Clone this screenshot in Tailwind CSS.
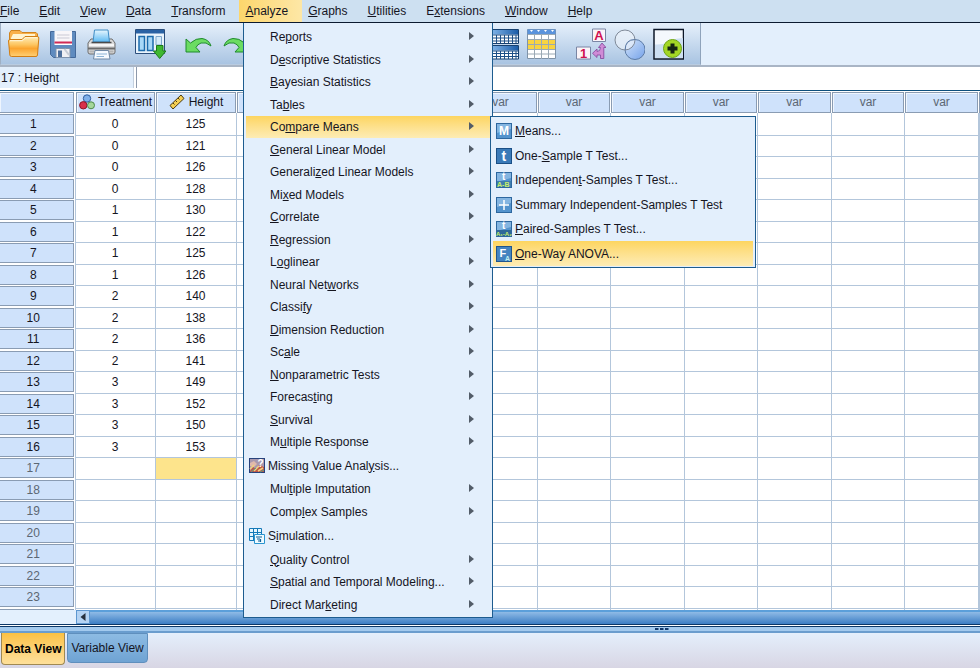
<!DOCTYPE html>
<html lang="en">
  <head>
    <meta charset="UTF-8" />
    <meta name="viewport" content="width=device-width, initial-scale=1.0" />
    <title>Data Editor</title>
    <script src="https://cdn.jsdelivr.net/npm/@tailwindcss/browser@4"></script>
  </head>
  <body
    class="relative flex h-screen flex-col overflow-hidden bg-white font-['Liberation_Sans',Arial,sans-serif] text-xs text-[#15151f]"
  >
    <!-- Menu bar -->
    <nav
      id="menu_bar"
      class="-ml-1.5 flex h-[23px] shrink-0 border-b border-[#0b1a30] bg-[#cde0f1]"
    ></nav>

    <!-- Toolbar -->
    <div class="flex h-11 shrink-0 border-b-2 border-[#a9b5c5] bg-[#e3effc]">
      <div
        class="flex items-center gap-4 border-r border-b border-l border-r-[#8fa3bb] border-b-[#b9cbe0] border-l-[#9fb0c4] border-l-dashed bg-linear-to-b from-[#e6f0fb] to-[#a9c4e2] pr-4 pl-[7px]"
      >
        <div class="flex gap-[7px]">
          <button aria-label="Open" class="size-8">
            <svg viewBox="0 0 32 32">
              <defs>
                <linearGradient id="folder" x1="0" y1="0" x2="0" y2="1">
                  <stop offset="0" stop-color="#ffeebb" />
                  <stop offset=".4" stop-color="#fdc662" />
                  <stop offset=".6" stop-color="#fba52f" />
                  <stop offset="1" stop-color="#ffd075" />
                </linearGradient>
              </defs>
              <path d="M1.500 5L3 2.500H12L14 4.500H28L29.500 6V20H1.500Z" fill="#f9b04a" stroke="#cf831f" />
              <path d="M3 10L5 6H27V14H3Z" fill="#fff3d0" />
              <path d="M.5 13Q.5 11.500 2 11.500H14L17 8.500H29Q31 8.500 30.800 10L29.500 27Q29.300 28.500 28 28.500H3.500Q2 28.500 1.800 27Z" fill="url(#folder)" stroke="#d17d14" />
              <path d="M2 12.700H14.500L17.500 9.700H29.500" fill="none" stroke="#fff6da" />
            </svg>
          </button>
          <button aria-label="Save" class="size-8">
            <svg viewBox="0 0 32 32">
              <path d="M3.500 3.500H28.500V29.500H6.500L3.500 26.500Z" fill="#5f8bbf" stroke="#44699a" />
              <path d="M7.500 3H25V16H7.500Z" fill="#f8f6f9" />
              <path d="M10 7H22.500M10 10H22.500" stroke="#c9c9d4" />
              <path d="M7.500 14.500H25" stroke="#d02a55" stroke-width="2" />
              <path d="M7.500 16.500H25" stroke="#fff" />
              <path d="M9 20.500H23V29.500H9Z" fill="#f0f0f4" stroke="#7f93ad" />
              <path d="M11 22.500H15V29H11Z" fill="#4d6f9c" />
              <path d="M17.500 21L22 27" stroke="#c6ccd6" stroke-width="2" />
            </svg>
          </button>
          <button aria-label="Print" class="size-8">
            <svg viewBox="0 0 32 32">
              <defs>
                <linearGradient id="sheet" x1="0" y1="0" x2="0" y2="1">
                  <stop offset="0" stop-color="#e8f7ff" />
                  <stop offset="1" stop-color="#5cb9f2" />
                </linearGradient>
              </defs>
              <path d="M5 11H26L29 15V24Q29 26 27 26H4Q2 26 2 24V15Z" fill="#dadada" stroke="#6c6c6c" />
              <path d="M8.500 2H22L23.500 14H7Z" fill="url(#sheet)" stroke="#3f8cc4" />
              <path d="M5.500 14.500H25.500" stroke="#4a4a4a" stroke-width="1.500" />
              <path d="M3 17H28" stroke="#fff" stroke-width="1.500" />
              <path d="M2 20.500H29" stroke="#6b6b6b" stroke-width="2" />
              <path d="M3.500 23.500H27.500" stroke="#b4b4b4" stroke-width="2" />
              <path d="M9 22.500H22.500L24 31H7.500Z" fill="#f6faff" stroke="#7089a5" />
              <path d="M10.500 26H21M10.500 28.500H18" stroke="#8db4d6" />
            </svg>
          </button>
        </div>
        <button aria-label="Recall recently used dialogs" class="size-8">
          <svg viewBox="0 0 32 32">
            <path d="M1.500 1.500H30.500V25.500H1.500Z" fill="#eaf4fc" stroke="#2c4f7c" />
            <path d="M2 2H30V5.500H2Z" fill="#2a62a4" />
            <path d="M5 8.500H10.500V22.500H5Z" fill="#a8d8f8" stroke="#1c6bac" stroke-width="1.500" />
            <path d="M13.500 8.500H19V22.500H13.500Z" fill="#a8d8f8" stroke="#1c6bac" stroke-width="1.500" />
            <path d="M22 8.500H27.500V17H22Z" fill="#d5ebfa" stroke="#7fa7cb" />
            <path d="M22.500 17.500H29V23H32L25.700 30.500L19.500 23H22.500Z" fill="#3fb830" stroke="#1d7a18" />
          </svg>
        </button>
        <div class="flex gap-[7px]">
          <button aria-label="Undo" class="size-8">
            <svg viewBox="0 0 32 32">
              <path d="M4 11L8.500 15Q14 10 20 10.500Q27 11.500 29 18Q24 13.500 19 15Q15 16.500 14 19.500L18 24H4Z" fill="#6bdc62" stroke="#1f8a2c" />
            </svg>
          </button>
          <button aria-label="Redo" class="size-8">
            <svg viewBox="0 0 32 32">
              <path d="M28 11L23.500 15Q18 10 12 10.500Q5 11.500 3 18Q8 13.500 13 15Q17 16.500 18 19.500L14 24H28Z" fill="#6bdc62" stroke="#1f8a2c" />
            </svg>
          </button>
        </div>
        <div class="w-[202px]"></div>
        <div class="flex gap-[7px]">
          <button aria-label="Split file" class="size-8">
            <svg viewBox="0 0 32 32">
              <defs>
                <linearGradient id="band" x1="0" y1="0" x2="1" y2="0">
                  <stop offset="0" stop-color="#8fc0f0" />
                  <stop offset="1" stop-color="#1b5ca8" />
                </linearGradient>
              </defs>
              <path d="M1 1.500H31.500V15.500H1ZM1 17.500H31.500V31H1Z" fill="#fff" stroke="#17406f" />
              <path d="M1 2H31V6.500H1ZM1 18H31V22.500H1Z" fill="url(#band)" />
              <path d="M1 7H31M1 10H31M1 13H31M1 23H31M1 25.500H31M1 28.500H31M5.500 7V15M9.500 7V15M13.500 7V15M17.500 7V15M21.500 7V15M25.500 7V15M29 7V15M5.500 23V31M9.500 23V31M13.500 23V31M17.500 23V31M21.500 23V31M25.500 23V31M29 23V31" stroke="#1d4f86" />
            </svg>
          </button>
          <button aria-label="Select cases" class="size-8">
            <svg viewBox="0 0 32 32">
              <path d="M1.500 1.500H29.500V30.500H1.500Z" fill="#fff" stroke="#7f93a8" />
              <path d="M1.500 1.500H29.500V6H1.500Z" fill="#5a93dc" />
              <path d="M4 2H7L5.500 4ZM11 2H14L12.500 4ZM18 2H21L19.500 4ZM25 2H28L26.500 4Z" fill="#fff" />
              <path d="M2 11H29V21H2Z" fill="#f8d440" />
              <path d="M2 6.500H29M2 11.500H29M2 16.500H29M2 21.500H29M2 26H29M8.500 6V31M15.500 6V31M22.500 6V31" stroke="#9aa9b4" />
            </svg>
          </button>
        </div>
        <div class="flex gap-[7px]">
          <button aria-label="Value labels" class="size-8">
            <svg viewBox="0 0 32 32" font-family="Liberation Sans, Arial, sans-serif" font-weight="bold" font-size="13" fill="#cf1150">
              <path d="M18.500 1H31.500V13.500H18.500Z" fill="#fbf4f8" stroke="#7a86a4" />
              <path d="M2.500 19H16.500V31H2.500Z" fill="#fbf4f8" stroke="#7a86a4" />
              <text x="25" y="12" text-anchor="middle">A</text>
              <text x="9.500" y="29.500" text-anchor="middle">1</text>
              <path d="M28 15L32 19.500H29.800V30.500H26.500V27H23V29.500L18.500 25.300L23 21V23.500Q26.500 23.500 26.500 19.500H24.500Z" fill="#cf8bd6" stroke="#83449a" stroke-width=".8" />
            </svg>
          </button>
          <button aria-label="Use variable sets" class="size-8">
            <svg viewBox="0 0 32 32">
              <defs>
                <linearGradient id="disc" x1="0" y1="0" x2="1" y2="1">
                  <stop offset="0" stop-color="#d4e4fa" />
                  <stop offset="1" stop-color="#74a2ea" />
                </linearGradient>
              </defs>
              <circle cx="22" cy="21.500" r="10" fill="url(#disc)" stroke="#5c7ba6" />
              <circle cx="12" cy="12" r="10" fill="#f0f5fc" fill-opacity=".6" stroke="#7f8998" />
              <path d="M12.200 22Q12 11.500 22 11.500" fill="none" stroke="#5c7ba6" />
            </svg>
          </button>
          <button aria-label="Customize toolbar" class="size-8">
            <svg viewBox="0 0 32 32">
              <path d="M2 1.500H31.500V31H2Z" fill="#f4f8fd" stroke="#0c1728" stroke-width="1.500" />
              <path d="M3 16.500Q12 17 18 13Q24 10 31 10V30H3Z" fill="#cddff2" />
              <circle cx="20.500" cy="20.500" r="9" fill="#a3d625" stroke="#6ea615" />
              <path d="M18.500 15.500H22.500V18.500H25.500V22.500H22.500V25.500H18.500V22.500H15.500V18.500H18.500Z" fill="#152413" />
            </svg>
          </button>
        </div>
      </div>
    </div>

    <!-- Cell reference and editor -->
    <div class="flex h-6 shrink-0 gap-0.5 border-b border-[#0d4f7c] pb-0.5">
      <label
        for="cell_editor"
        class="flex w-[134px] items-center border-r border-[#c3cfdd] bg-[#e3effc] pl-px"
        >17 : Height</label
      >
      <input
        id="cell_editor"
        type="text"
        class="min-w-0 flex-1 border-l border-[#8d99ab] bg-white px-1 outline-none"
      />
    </div>

    <!-- Data grid -->
    <main class="min-h-0 flex-1 overflow-hidden bg-white">
      <table class="w-full table-fixed border-collapse">
        <thead>
          <tr id="grid_head" class="h-[22px]"></tr>
        </thead>
        <tbody id="grid_body"></tbody>
      </table>
    </main>

    <!-- Horizontal scrollbar -->
    <div class="flex h-[15px] shrink-0 border-b border-[#0b3767]">
      <div class="w-[76px] bg-[#e3f0fd]"></div>
      <button
        aria-label="Scroll left"
        class="flex w-3.5 items-center justify-center border border-[#5d97d0] bg-[#b4d3f3]"
      >
        <svg class="size-2" viewBox="0 0 8 8"><path d="M6.500 0V8L1.500 4Z" fill="#26303d" /></svg>
      </button>
      <div
        class="flex-1 border-t-2 border-[#5b9fda] bg-linear-to-b from-[#8fbbe6] to-[#3a7dc3]"
      ></div>
    </div>
    <div
      class="mt-px flex h-[7px] shrink-0 items-center border-t border-b-2 border-t-[#0b3767] border-b-[#6a9dce] bg-[#a3caee] pl-[66.800%]"
    >
      <svg class="h-1 w-3.5" viewBox="0 0 14 4">
        <path d="M0 1H3L4 2L3 3H0ZM5 1H8L9 2L8 3H5ZM10 1H13L14 2L13 3H10Z" fill="#12396b" />
      </svg>
    </div>

    <!-- View tabs -->
    <footer
      class="mb-0.5 flex h-[35px] shrink-0 items-start gap-0.5 bg-linear-to-b from-[#e4effc] to-[#d8d6e4] pl-px"
    >
      <button
        class="h-8 rounded-b border border-t-0 border-[#a08952] bg-linear-to-b from-[#fbc141] to-[#fee09a] px-[3px] font-bold text-black"
      >
        Data View
      </button>
      <button
        class="h-[30px] rounded-b border border-[#5f8fbd] bg-linear-to-b from-[#8dbbe3] to-[#6fa3d3] px-[3px]"
      >
        Variable View
      </button>
    </footer>

    <!-- Analyze menu -->
    <div
      id="analyze_menu"
      class="absolute top-[23px] left-[243px] flex w-[250px] flex-col border border-t-0 border-[#1d5c8f] bg-[#e3effc] px-0.5 pt-[3px] pb-px"
    ></div>

    <!-- Compare Means submenu -->
    <div
      id="compare_menu"
      class="absolute top-[116px] left-[490px] flex w-[266px] flex-col border border-[#1d5c8f] bg-[#e3effc] px-0.5 pt-0.5 pb-px"
    ></div>

    <script>
      // "&" marks the mnemonic letter
      const mnemonic = (text) => text.replace(/&(.)/, '<span class="underline underline-offset-1">$1</span>');

      const menuBar = [
        "&File", "&Edit", "&View", "&Data", "&Transform", "&Analyze",
        "&Graphs", "&Utilities", "E&xtensions", "&Window", "&Help",
      ];

      const tile = (content) => `<svg class="size-4" viewBox="0 0 16 16" font-family="Liberation Sans, Arial, sans-serif" font-weight="bold" fill="#fff">
        <rect x=".5" y=".5" width="15" height="15" fill="#5393cd" stroke="#2d679f" />
        <path d="M1 1H15V6L1 10Z" fill="#84b5e1" />${content}</svg>`;

      const missingIcon = `<svg class="size-4" viewBox="0 0 16 16" font-family="Liberation Sans, Arial, sans-serif" font-weight="bold">
        <rect x=".5" y=".5" width="15" height="14" fill="#a898ae" stroke="#27427c" />
        <path d="M1 5L5 3L8 6L5 9L1 8Z" fill="#e0b9ac" />
        <path d="M1 13L4 9L7 11L10 7L15 9V14H1Z" fill="#bd5546" />
        <path d="M1 11L5 7M5 13L10 8M9 13L14 10" stroke="#f1d17e" stroke-width="1.500" />
        <path d="M2 14L7 10M11 14L15 12" stroke="#5fa184" />
        <text x="8.500" y="9" font-size="10" fill="#fff">?</text></svg>`;

      const simulationIcon = `<svg class="size-4" viewBox="0 0 16 16">
        <path d="M.5 .5H12.500V12.500H.5Z" fill="#e6f6ff" stroke="#1479b8" />
        <path d="M.5 4.500H12.500M.5 8.500H12.500M4.500 .5V12.500M8.500 .5V12.500" stroke="#1479b8" />
        <path d="M5.500 6.500H15.500V15.500H5.500Z" fill="#eefaff" stroke="#2a94cf" />
        <path d="M7 9H13M8 11H11M9 13H11M11.500 11V14" stroke="#0f5f98" stroke-width="1.200" fill="none" /></svg>`;

      const analyzeItems = [
        { text: "Re&ports" },
        { text: "D&escriptive Statistics" },
        { text: "&Bayesian Statistics" },
        { text: "Ta&bles" },
        { text: "Co&mpare Means", active: true },
        { text: "&General Linear Model" },
        { text: "Generali&zed Linear Models" },
        { text: "Mi&xed Models" },
        { text: "&Correlate" },
        { text: "&Regression" },
        { text: "L&oglinear" },
        { text: "Neural Net&works" },
        { text: "Classi&fy" },
        { text: "&Dimension Reduction" },
        { text: "Sc&ale" },
        { text: "&Nonparametric Tests" },
        { text: "Forecas&ting" },
        { text: "&Survival" },
        { text: "M&ultiple Response" },
        { text: "Missing Value Anal&ysis...", icon: missingIcon },
        { text: "Mul&tiple Imputation" },
        { text: "Comp&lex Samples" },
        { text: "S&imulation...", icon: simulationIcon },
        { text: "&Quality Control" },
        { text: "&Spatial and Temporal Modeling..." },
        { text: "Direct Mar&keting" },
      ];

      const compareItems = [
        { text: "&Means...", icon: tile('<text x="8" y="12" font-size="12" text-anchor="middle">M</text>') },
        { text: "One-&Sample T Test...", icon: tile('<rect x=".5" y=".5" width="15" height="15" fill="#3a7ab8" stroke="#1a4f86" /><text x="5.500" y="13" font-size="14">t</text>') },
        { text: "Independen&t-Samples T Test...", icon: tile('<text x="6" y="8" font-size="10">t</text><path d="M1 9H15V15H1Z" fill="#3f7eae" /><text x="1" y="15" font-size="7" fill="#c9f06a">A-B</text>') },
        { text: "Summary Independent-Samples T Test", icon: tile('<path d="M8 3V13M3 8H13" stroke="#fff" stroke-width="1.500" />') },
        { text: "&Paired-Samples T Test...", icon: tile('<text x="6" y="8" font-size="10">t</text><path d="M1 9H15V15H1Z" fill="#2e6899" /><text x="0" y="15" font-size="6" fill="#c9f06a">A₁-A₂</text>') },
        { text: "&One-Way ANOVA...", active: true, icon: tile('<rect x=".5" y=".5" width="15" height="15" fill="#4484c0" stroke="#1f568e" /><text x="3.500" y="11" font-size="11">F</text><text x="9" y="15" font-size="7" fill="#bff0f0">A</text>') },
      ];

      const highlight = "bg-linear-to-b from-[#fdd55f] to-[#fdecb4]";

      document.getElementById("menu_bar").innerHTML = menuBar
        .map((text) => {
          const active = text === "&Analyze" ? "bg-linear-to-r from-[#fdd66b] to-[#fde7a6]" : "";
          return `<button class="pr-3.5 pl-1.5 ${active}">${mnemonic(text)}</button>`;
        })
        .join("");

      document.getElementById("analyze_menu").innerHTML = analyzeItems
        .map((item) => {
          if (item.icon) {
            return `<button class="flex h-[25px] items-center gap-[3px] pl-[3px] text-left">${item.icon}<span>${mnemonic(item.text)}</span></button>`;
          }
          return `<button class="flex items-center justify-between pr-4 pl-6 text-left odd:h-[22px] even:h-[23px] ${item.active ? highlight : ""}">
            <span>${mnemonic(item.text)}</span>
            <svg class="mb-0.5 h-2 w-1.5" viewBox="0 0 6 8"><path d="M1 0L6 4L1 8Z" fill="#525c68" /></svg>
          </button>`;
        })
        .join("");

      document.getElementById("compare_menu").innerHTML = compareItems
        .map(
          (item) => `<button class="flex items-center gap-[3px] pl-[3px] text-left odd:h-6 even:h-[25px] ${item.active ? highlight : ""}">
            ${item.icon}<span>${mnemonic(item.text)}</span>
          </button>`
        )
        .join("");

      // Data grid
      const data = [
        [0, 125], [0, 121], [0, 126], [0, 128],
        [1, 130], [1, 122], [1, 125], [1, 126],
        [2, 140], [2, 138], [2, 136], [2, 141],
        [3, 149], [3, 152], [3, 150], [3, 153],
      ];
      const rowCount = 24;
      const varCount = 10;
      const selectedRow = 17;

      const nominalIcon = `<svg class="size-4 shrink-0" viewBox="0 0 16 16">
        <circle cx="8" cy="4.500" r="3.700" fill="#7fb0ea" stroke="#2f5f9f" />
        <circle cx="4.300" cy="11.300" r="3.700" fill="#d9304a" stroke="#8d1428" />
        <circle cx="12" cy="11.300" r="3.500" fill="#a5d79a" stroke="#4d8a4b" /></svg>`;
      const scaleIcon = `<svg class="size-4 shrink-0" viewBox="0 0 16 16">
        <path d="M1 11.500L12 1L15 4.500L4 15Z" fill="#f4cf52" stroke="#4a3a12" />
        <path d="M4 9L5.500 10.500M6.500 6.500L8 8M9 4L10.500 5.500" stroke="#4a3a12" /></svg>`;

      const headBox = "flex h-[21px] items-center justify-center overflow-hidden border border-[#8a9cb3] bg-[#cfe2fb] shadow-[inset_1px_1px_0_#eef5fe] whitespace-nowrap";

      let head = `<th class="w-[75px] p-0 pr-px"><div class="${headBox} border-l-0"></div></th>
        <th class="w-20 p-0 pl-px font-normal"><div class="${headBox} gap-[3px]">${nominalIcon}Treatment</div></th>
        <th class="w-[81px] p-0 pl-px font-normal"><div class="${headBox} gap-1">${scaleIcon}Height</div></th>
        <th class="w-20 p-0 pl-px font-normal text-[#5c6773]"><div class="${headBox}">var</div></th>`;
      for (let i = 1; i < varCount; i++) {
        head += `<th class="p-0 pl-px font-normal text-[#5c6773] odd:w-[74px] even:w-[73px]"><div class="${headBox}">var</div></th>`;
      }
      // last column takes the rest of the window
      head += `<th class="p-0 pl-px"><div class="${headBox}"></div></th>`;
      document.getElementById("grid_head").innerHTML = head;

      const cell = "border-r border-b border-[#b3c6db] p-0 text-center";
      let body = "";
      for (let row = 1; row <= rowCount; row++) {
        const values = data[row - 1] || ["", ""];
        const labelColor = row <= data.length ? "text-[#15151f]" : "text-[#5c6773]";
        const label = row < rowCount ? row : "";
        body += `<tr class="odd:h-[22px] even:h-[21px]">
          <th class="border-r border-[#b3c6db] p-0 pr-px font-normal ${labelColor}">
            <div class="flex h-5 items-center justify-center border border-l-0 border-[#8a9cb3] bg-[#cfe2fb] pr-1.5">${label}</div>
          </th>
          <td class="${cell}">${values[0]}</td>
          <td class="${cell} ${row === selectedRow ? "bg-[#fde48c]" : ""}">${values[1]}</td>`;
        for (let i = 0; i <= varCount; i++) {
          body += `<td class="${cell}"></td>`;
        }
        body += "</tr>";
      }
      document.getElementById("grid_body").innerHTML = body;
    </script>
  </body>
</html>
